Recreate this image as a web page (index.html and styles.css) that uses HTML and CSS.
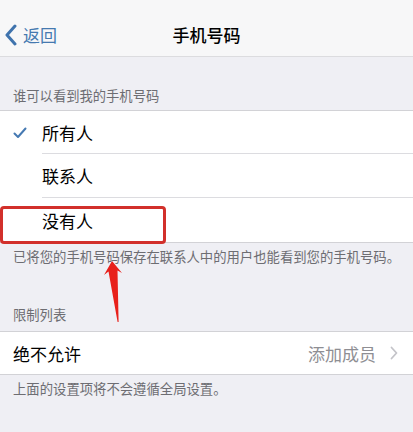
FILE: index.html
```html
<!DOCTYPE html>
<html lang="zh-CN">
<head>
<meta charset="utf-8">
<link rel="stylesheet" href="styles.css">
</head>
<body>
<div class="screen">
  <div class="nav">
    <div class="back">
      <svg class="back-icon" width="14" height="22" viewBox="0 0 14 22"><path d="M11 2 L3 11 L11 20" fill="none" stroke="#3f73ad" stroke-width="3" stroke-linecap="round" stroke-linejoin="round"/></svg>
      <span class="back-text">返回</span>
    </div>
    <div class="title">手机号码</div>
  </div>

  <div class="sec-head first">谁可以看到我的手机号码</div>
  <div class="group">
    <div class="row">
      <div class="check-cell">
        <svg width="14" height="12" viewBox="0 0 14 12"><path d="M1.5 6.5 L5 10 L12.5 1.5" fill="none" stroke="#4579b2" stroke-width="2" stroke-linecap="round" stroke-linejoin="round"/></svg>
      </div>
      <div class="row-main">所有人</div>
    </div>
    <div class="row">
      <div class="check-cell"></div>
      <div class="row-main">联系人</div>
    </div>
    <div class="row">
      <div class="check-cell"></div>
      <div class="row-main last">没有人</div>
    </div>
  </div>
  <div class="sec-foot">已将您的手机号码保存在联系人中的用户也能看到您的手机号码。</div>

  <div class="sec-head second">限制列表</div>
  <div class="group">
    <div class="row plain">
      <div class="row-main last">
        <span class="label">绝不允许</span>
        <span class="detail">添加成员
          <svg class="chev" width="8" height="14" viewBox="0 0 8 14"><path d="M1.5 1.5 L6.5 7 L1.5 12.5" fill="none" stroke="#c4c4c9" stroke-width="1.8" stroke-linecap="round" stroke-linejoin="round"/></svg>
        </span>
      </div>
    </div>
  </div>
  <div class="sec-foot">上面的设置项将不会遵循全局设置。</div>

  <div class="highlight"></div>
  <svg class="arrow" width="413" height="432" viewBox="0 0 413 432"><polygon points="112,261 122,273 117.5,270.5 118.6,322 117.6,322 108.5,271.5 104,275" fill="#e8201a"/></svg>
</div>
</body>
</html>
```

FILE: styles.css
```css
* { box-sizing: border-box; }
html, body { margin: 0; padding: 0; }
body {
  width: 413px;
  height: 432px;
  overflow: hidden;
  background: #efeff4;
  font-family: "Noto Sans CJK SC", "Noto Sans", sans-serif;
  color: #000;
}
.screen {
  position: relative;
  width: 413px;
  height: 432px;
}
.nav {
  height: 57px;
  background: #f7f7f8;
  border-bottom: 1px solid #dcdcdf;
  display: flex;
  align-items: center;
  justify-content: center;
  position: relative;
}
.back {
  position: absolute;
  left: 4px;
  top: 24px;
  display: flex;
  align-items: center;
  gap: 5px;
}
.back-text {
  font-size: 17px;
  line-height: 22px;
  color: #4579b0;
}
.title {
  font-size: 17px;
  font-weight: 500;
  line-height: 22px;
  margin-top: 13px;
}
.sec-head {
  display: flex;
  align-items: flex-end;
  padding: 0 13px 6px;
  font-size: 13.3px;
  line-height: 16px;
  color: #6d6d72;
}
.sec-head.first { height: 53px; }
.sec-head.second { height: 66px; padding-bottom: 8px; }
.group {
  background: #fff;
  border-top: 1px solid #d2d2d6;
  border-bottom: 1px solid #d2d2d6;
}
.row {
  display: flex;
  height: 44px;
}
.row:first-child { height: 43px; }
.check-cell {
  width: 42px;
  display: flex;
  align-items: center;
  justify-content: flex-start;
  padding-left: 13px;
}
.row-main {
  flex: 1;
  display: flex;
  align-items: center;
  font-size: 17px;
  border-bottom: 1px solid #dcdce0;
}
.row-main.last { border-bottom: none; }
.row.plain { height: 42px; padding-left: 13px; }
.row.plain .row-main { justify-content: space-between; padding-right: 15px; }
.detail {
  color: #8e8e93;
  display: flex;
  align-items: center;
  gap: 14px;
}
.sec-foot {
  padding: 6px 13px 0;
  font-size: 13.35px;
  line-height: 16px;
  color: #6d6d72;
  white-space: nowrap;
}
.highlight {
  position: absolute;
  left: 0;
  top: 206px;
  width: 166px;
  height: 38px;
  border: 3px solid #d2302b;
  border-radius: 4px;
}
.arrow {
  position: absolute;
  left: 0;
  top: 0;
  pointer-events: none;
}
```
